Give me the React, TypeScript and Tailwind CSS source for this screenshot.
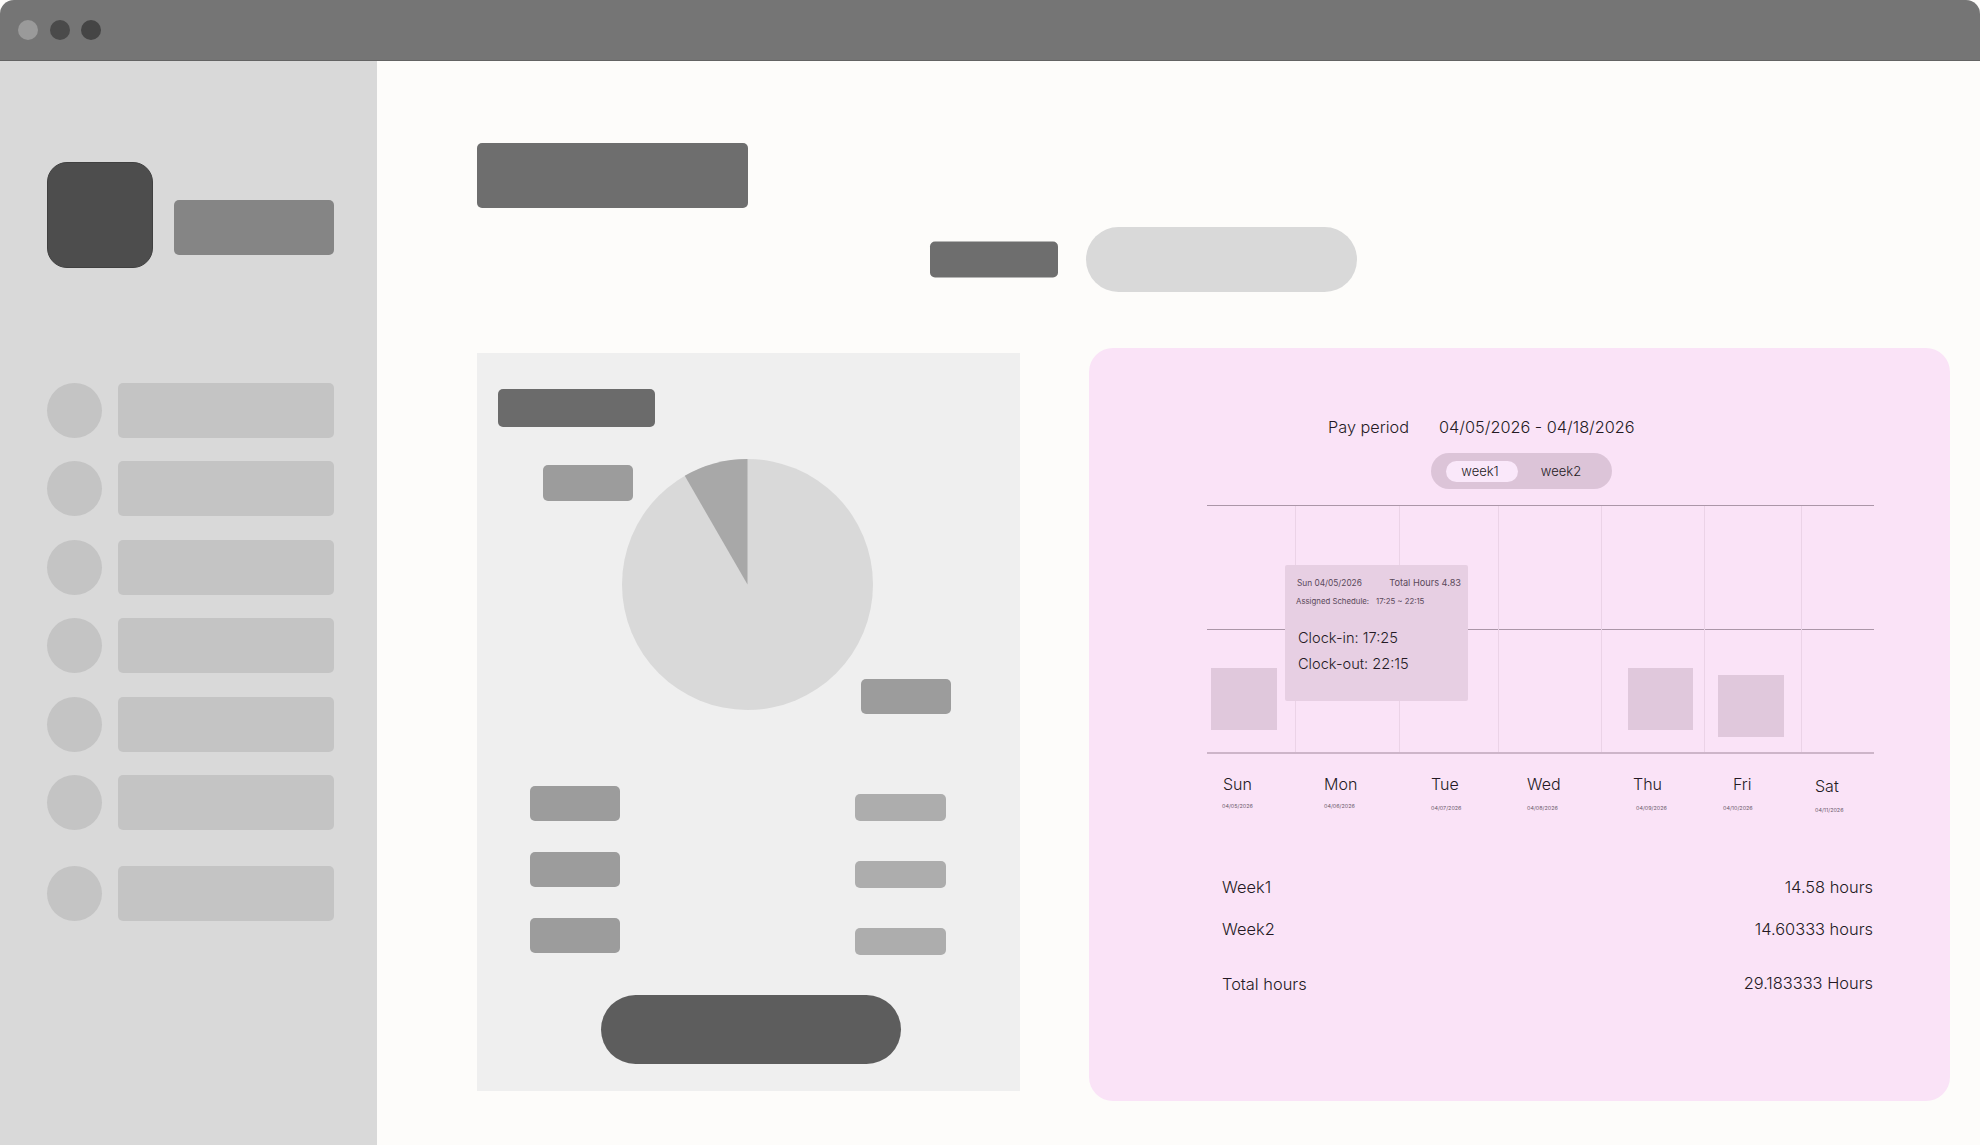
const navGaps = ["", "", "", "", "", "", "mt-[12px]"];

function Block({ className }: { className: string }) {
  return <div className={`rounded-[5px] ${className}`} />;
}

function Sidebar() {
  return (
    <aside className="w-[377px] shrink-0 bg-[#d9d9d9] pl-[47px] pt-[101px] pr-[43px]">
      <div className="flex">
        <div className="h-[106px] w-[106px] rounded-[20px] border border-[#404040] bg-[#4d4d4d]" />
        <div className="ml-[21px] mt-[38px] h-[55px] w-[160px] rounded-[5px] bg-[#858585]" />
      </div>
      <nav className="mt-[114.5px] flex flex-col gap-[23.6px]">
        {navGaps.map((gap, i) => (
          <div key={i} className={`flex items-center gap-[15.5px] ${gap}`}>
            <div className="h-[55px] w-[55px] rounded-full bg-[#c4c4c4]" />
            <div className="h-[55px] flex-1 rounded-[5px] bg-[#c4c4c4]" />
          </div>
        ))}
      </nav>
    </aside>
  );
}

function PieCard() {
  return (
    <section className="mt-[5px] h-[738px] w-[543px] shrink-0 bg-[#efefef] pl-[21px] pt-[36px]">
      <Block className="h-[38px] w-[157px] bg-[#6b6b6b]" />
      <div className="mt-[32px] flex h-[255px] items-start">
        <Block className="relative z-10 ml-[45px] mt-[6px] h-[36px] w-[90px] bg-[#9c9c9c]" />
        <svg viewBox="0 0 250 250" className="ml-[-11px] h-[251px] w-[251px] shrink-0">
          <circle cx="125" cy="125" r="125" fill="#d9d9d9" />
          <path d="M125 125 L125 0 A125 125 0 0 0 62.5 16.75 Z" fill="#a8a8a8" />
        </svg>
        <Block className="relative z-10 ml-[-12.5px] mt-[220px] h-[35px] w-[90px] bg-[#9c9c9c]" />
      </div>
      <div className="mt-[72px] flex">
        <div className="ml-[32px] flex w-[90px] flex-col gap-[31px]">
          <Block className="h-[35px] bg-[#9c9c9c]" />
          <Block className="h-[35px] bg-[#9c9c9c]" />
          <Block className="h-[35px] bg-[#9c9c9c]" />
        </div>
        <div className="ml-[235px] mt-[7.5px] flex w-[91px] flex-col gap-[39.5px]">
          <Block className="h-[27.5px] bg-[#adadad]" />
          <Block className="h-[27.5px] bg-[#adadad]" />
          <Block className="h-[27.5px] bg-[#adadad]" />
        </div>
      </div>
      <div className="ml-[103px] mt-[40px] h-[69px] w-[300px] rounded-full bg-[#5d5d5d]" />
    </section>
  );
}

const columns = [
  { name: "Sun", date: "04/05/2026", w: "w-[89px]", pl: "pl-[16px]", dm: "ml-[-1px]", dt: "mt-[6px]", top: "", bar: "ml-[4px] w-[66px] mb-[22px]" },
  { name: "Mon", date: "04/06/2026", w: "w-[104px]", pl: "pl-[28px]", dm: "", dt: "mt-[6px]", top: "", bar: "" },
  { name: "Tue", date: "04/07/2026", w: "w-[99px]", pl: "pl-[31px]", dm: "", dt: "mt-[8px]", top: "", bar: "" },
  { name: "Wed", date: "04/08/2026", w: "w-[103px]", pl: "pl-[28px]", dm: "", dt: "mt-[8px]", top: "", bar: "" },
  { name: "Thu", date: "04/09/2026", w: "w-[103px]", pl: "pl-[31px]", dm: "ml-[3px]", dt: "mt-[8px]", top: "", bar: "ml-[26px] w-[65px] mb-[22px]" },
  { name: "Fri", date: "04/10/2026", w: "w-[97px]", pl: "pl-[28px]", dm: "ml-[-10px]", dt: "mt-[8px]", top: "", bar: "ml-[13px] w-[66px] mb-[15px]" },
  { name: "Sat", date: "04/11/2026", w: "w-[72px]", pl: "pl-[13px]", dm: "", dt: "mt-[8px]", top: "pt-[2px]", bar: "" },
];

function Chart() {
  return (
    <div className="relative ml-[118px] mt-[16px] w-[667px] border-b-2 border-t border-b-[#cdb5c9] border-t-[#ab96a8]">
      <div className="flex h-[246px]">
        {columns.map((c, i) => (
          <div key={c.name} className={`flex flex-col ${c.w} ${i < 6 ? "border-r border-[#ebd3e7]" : ""}`}>
            <div className="h-[124px] border-b border-[#ab96a8]" />
            <div className="flex flex-1 items-end">
              {c.bar && <div className={`h-[62px] bg-[#e0c8dc] ${c.bar}`} />}
            </div>
          </div>
        ))}
      </div>
      <div className="absolute left-[78px] top-[59px] h-[136px] w-[183px] rounded-[2px] bg-[#e7cfe3] pl-[12px] pr-[7px] pt-[11px] text-[#5a495a]">
        <div className="flex justify-between leading-[14px]">
          <span className="text-[8.3px]">Sun 04/05/2026</span>
          <span className="text-[9.2px]">Total Hours 4.83</span>
        </div>
        <div className="ml-[-1px] mt-[4px] flex gap-[7px] text-[7.8px] leading-[14px]">
          <span>Assigned Schedule:</span>
          <span>17:25 ~ 22:15</span>
        </div>
        <div className="ml-[1px] mt-[17px] text-[14.6px] leading-[26px] font-light text-[#241a24]">
          <div>Clock-in: 17:25</div>
          <div>Clock-out: 22:15</div>
        </div>
      </div>
    </div>
  );
}

function Days() {
  return (
    <div className="ml-[118px] mt-[18px] flex w-[667px] text-[#241a24]">
      {columns.map((c) => (
        <div key={c.name} className={`${c.w} ${c.pl} ${c.top}`}>
          <div className="text-[16px] leading-[24px] font-light">{c.name}</div>
          <div className={`text-[5.4px] leading-[8px] text-[#6b5a6b] ${c.dm} ${c.dt}`}>{c.date}</div>
        </div>
      ))}
    </div>
  );
}

function PayCard() {
  return (
    <section className="ml-[69px] h-[753px] w-[861px] shrink-0 rounded-[24px] bg-[#fae3f7] pt-[67px] text-[#241a24]">
      <div className="ml-[239px] flex gap-[30px] text-[16.3px] leading-[24px] font-light">
        <span>Pay period</span>
        <span>04/05/2026 - 04/18/2026</span>
      </div>
      <div className="ml-[342px] mt-[14px] flex h-[36px] w-[181px] items-center rounded-full bg-[#dcc4d8] pl-[15px] text-[13px] font-light">
        <span className="flex h-[21px] w-[72px] items-center justify-center rounded-full bg-[#fae8fa] pr-[4px] pt-[1px]">week1</span>
        <span className="ml-[7px] w-[72px] pt-[1px] text-center">week2</span>
      </div>
      <Chart />
      <Days />
      <div className="ml-[133px] mr-[77px] mt-[61px] flex flex-col text-[16.4px] leading-[24px] font-light">
        <div className="flex justify-between">
          <span>Week1</span>
          <span>14.58 hours</span>
        </div>
        <div className="mt-[18px] flex justify-between">
          <span>Week2</span>
          <span>14.60333 hours</span>
        </div>
        <div className="mt-[31px] flex justify-between">
          <span>Total hours</span>
          <span className="mt-[-1px]">29.183333 Hours</span>
        </div>
      </div>
    </section>
  );
}

export default function App() {
  return (
    <div className="flex h-[1145px] w-[1980px] flex-col overflow-hidden bg-[#fdfcfa] font-['Inter',sans-serif]">
      <header className="flex h-[61px] shrink-0 items-center gap-[11.5px] rounded-t-[14px] border-b border-[#636363] bg-[#757575] pl-[18px]">
        <span className="h-[20px] w-[20px] rounded-full bg-[#9a9a9a]" />
        <span className="h-[20px] w-[20px] rounded-full bg-[#4a4a4a]" />
        <span className="h-[20px] w-[20px] rounded-full bg-[#454545]" />
      </header>
      <div className="flex flex-1">
        <Sidebar />
        <main className="flex-1 pl-[100px] pt-[82px]">
          <div className="h-[65px] w-[271px] rounded-[5px] bg-[#6e6e6e]" />
          <div className="ml-[453px] mt-[19px] flex items-center gap-[28px]">
            <div className="h-[36px] w-[128px] -translate-y-[0.5px] rounded-[5px] bg-[#6e6e6e]" />
            <div className="h-[65px] w-[271px] rounded-full bg-[#d9d9d9]" />
          </div>
          <div className="mt-[56px] flex items-start">
            <PieCard />
            <PayCard />
          </div>
        </main>
      </div>
    </div>
  );
}
